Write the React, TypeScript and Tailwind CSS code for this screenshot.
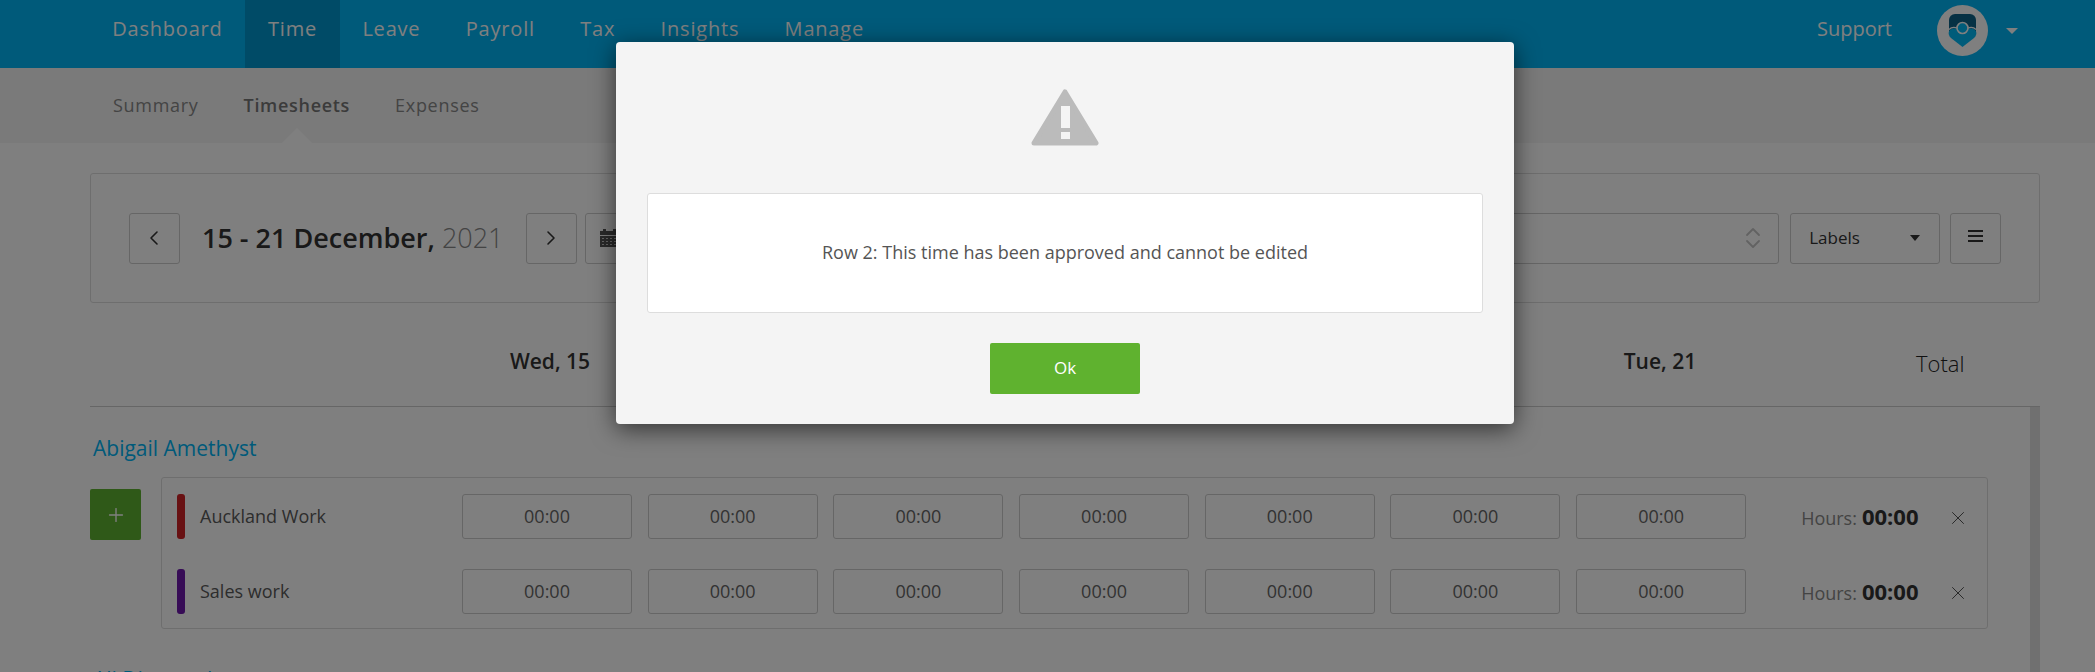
import { ChevronLeft, ChevronRight, ChevronUp, ChevronDown, Plus, X } from "lucide-react";

const navItems = ["Dashboard", "Time", "Leave", "Payroll", "Tax", "Insights", "Manage"];
const rows = [
  { name: "Auckland Work", color: "bg-[#d02226]" },
  { name: "Sales work", color: "bg-[#6e18ac]" },
];
const cells = [0, 1, 2, 3, 4, 5, 6];

const Logo = () => (
  <svg viewBox="0 0 51 51" className="w-[51px] h-[51px] block mb-[7px]">
    <circle cx="25.5" cy="25.5" r="25.5" fill="#ffffff" />
    <path d="M12 15a6 6 0 0 1 6-6h15a6 6 0 0 1 6 6v12H12z" fill="#0c6288" />
    <path d="M25.5 42 L14 33 C9.5 29 12 23.5 16.5 23.5 L34.5 23.5 C39 23.5 41.5 29 37 33 Z" fill="#00b8f5" />
    <path d="M12 24.5c2-2 5-2.500 8-1.500M39 24.500c-2-2-5-2.500-8-1.500" fill="none" stroke="#ffffff" strokeWidth="1.200" />
    <circle cx="25.5" cy="23" r="5.5" fill="#00b8f5" stroke="#ffffff" strokeWidth="1.6" />
  </svg>
);

const CalendarIcon = () => (
  <svg viewBox="0 0 19 18" className="w-[19px] h-[18px]" fill="#555">
    <path d="M0 2h3V0h3v2h7V0h3v2h3v4H0z" />
    <path d="M0 7h19v11H0z" />
    <g fill="#ccc">
      <rect x="2" y="9" width="2" height="1" />
      <rect x="6" y="9" width="2" height="1" />
      <rect x="10" y="9" width="2" height="1" />
      <rect x="14" y="9" width="2" height="1" />
      <rect x="2" y="12" width="2" height="1" />
      <rect x="6" y="12" width="2" height="1" />
      <rect x="10" y="12" width="2" height="1" />
      <rect x="14" y="12" width="2" height="1" />
      <rect x="2" y="15" width="2" height="1" />
      <rect x="6" y="15" width="2" height="1" />
      <rect x="10" y="15" width="2" height="1" />
      <rect x="14" y="15" width="2" height="1" />
    </g>
  </svg>
);

const App = () => {
  return (
    <div className="relative h-[672px] w-[2095px] overflow-hidden bg-white text-[#333] font-['Open_Sans','Noto_Sans',sans-serif]">
      {/* top nav */}
      <div className="h-[68px] bg-[#00b4f5] flex items-center pl-[89.500px] pr-[77px]">
        {navItems.map((item) => (
          <div
            key={item}
            className={
              item === "Time"
                ? "h-full px-[22.700px] pb-[10px] flex items-center text-[20px] tracking-[0.8px] text-white bg-[#0096ce]"
                : "h-full px-[22.700px] pb-[10px] flex items-center text-[20px] tracking-[0.8px] text-white"
            }
          >
            {item}
          </div>
        ))}
        <div className="ml-auto text-[20px] text-white mr-[45px] mb-[10px]">Support</div>
        <Logo />
        <div className="ml-[18px] mb-[7px] w-0 h-0 border-x-[6px] border-x-transparent border-t-[6px] border-t-white" />
      </div>

      {/* sub nav */}
      <div className="relative h-[75px] bg-[#f4f4f4] flex items-center pl-[113px] gap-[45px] text-[18px] tracking-[0.7px] text-[#888]">
        <span>Summary</span>
        <span className="font-semibold text-[#777]">Timesheets</span>
        <span>Expenses</span>
        <div className="absolute left-[282px] bottom-0 w-0 h-0 border-x-[15px] border-x-transparent border-b-[15px] border-b-white" />
      </div>

      {/* filter bar */}
      <div className="mx-[90px] mt-[30px] h-[130px] w-[1950px] border border-[#ddd] rounded-[3px] bg-white flex items-center pl-[38px] pr-[38px]">
        <button className="w-[51px] h-[51px] border border-[#ccc] rounded-[3px] flex items-center justify-center">
          <ChevronLeft size={24} strokeWidth={1.6} color="#333" />
        </button>
        <div className="ml-[22px] text-[27px] font-semibold text-[#333] w-[324px] whitespace-nowrap">
          15 - 21 December, <span className="font-light text-[#888]">2021</span>
        </div>
        <button className="w-[51px] h-[51px] border border-[#ccc] rounded-[3px] flex items-center justify-center">
          <ChevronRight size={24} strokeWidth={1.6} color="#333" />
        </button>
        <button className="ml-[8px] w-[51px] h-[51px] border border-[#ccc] rounded-[3px] flex items-center justify-center">
          <CalendarIcon />
        </button>
        <div className="ml-[10px] w-[1135px] h-[51px] border border-[#ccc] rounded-[3px] flex items-center justify-end pr-[13px]">
          <div className="flex flex-col text-[#c4c4c4]">
            <ChevronUp size={24} strokeWidth={1.8} className="-mb-[6px]" />
            <ChevronDown size={24} strokeWidth={1.8} className="-mt-[6px]" />
          </div>
        </div>
        <div className="ml-[11px] w-[150px] h-[51px] border border-[#ccc] rounded-[3px] flex items-center justify-between pl-[18px] pr-[19px] text-[17px]">
          Labels
          <div className="w-0 h-0 border-x-[5px] border-x-transparent border-t-[6px] border-t-[#333]" />
        </div>
        <div className="ml-[10px] w-[51px] h-[51px] border border-[#ccc] rounded-[3px] flex flex-col items-center justify-center gap-[3px] pb-[4px]">
          <div className="w-[15px] h-[2px] bg-[#333]" />
          <div className="w-[15px] h-[2px] bg-[#333]" />
          <div className="w-[15px] h-[2px] bg-[#333]" />
        </div>
      </div>

      {/* day header */}
      <div className="mx-[90px] w-[1950px] h-[104px] border-b border-[#ccc] relative flex items-center pl-[374px] pt-[14px] text-[21px] font-semibold text-[#333]">
        <div className="w-[172px] text-center">Wed, 15</div>
        <div className="ml-[938px] w-[172px] text-center">Tue, 21</div>
        <div className="ml-[170px] text-[22px] font-light text-[#222] pt-[4px]">Total</div>
      </div>

      {/* body */}
      <div className="relative mx-[90px] w-[1950px] pr-[10px]">
        <div className="absolute right-0 top-0 w-[10px] h-[280px] bg-[#e0e0e0]" />
        <div className="pt-[28px] pl-[3px] text-[21px] leading-[26px] text-[#00b4f5]">Abigail Amethyst</div>
        <div className="flex mt-[16px]">
          <button className="mt-[12px] w-[51px] h-[51px] bg-[#5fb230] rounded-[2px] flex items-center justify-center">
            <Plus size={22} strokeWidth={1.5} color="#ffffff" />
          </button>
          <div className="ml-[20px] w-[1827px] h-[152px] border border-[#ddd] rounded-[3px] flex flex-col gap-[30px] pt-[16px] pl-[15px]">
            {rows.map((row) => (
              <div key={row.name} className="flex items-center h-[45px]">
                <div className={`w-[8px] h-[45px] rounded-[3px] ${row.color}`} />
                <div className="ml-[15px] w-[262px] text-[18px] text-[#5a5a5a]">{row.name}</div>
                <div className="flex gap-[15.7px]">
                  {cells.map((c) => (
                    <div
                      key={c}
                      className="w-[170px] h-[45px] border border-[#ccc] rounded-[3px] flex items-center justify-center text-[18px] text-[#666]"
                    >
                      00:00
                    </div>
                  ))}
                </div>
                <div className="ml-[55px] flex items-baseline whitespace-nowrap">
                  <span className="text-[18px] text-[#888]">Hours:</span>
                  <span className="ml-[5px] text-[22px] font-bold text-[#333]">00:00</span>
                </div>
                <X size={22} strokeWidth={1} color="#444" className="ml-[28px] mt-[2px]" />
              </div>
            ))}
          </div>
        </div>
        <div className="pt-[37px] pl-[3px] text-[21px] leading-[26px] text-[#00b4f5]">Ali Diamond</div>
      </div>

      {/* overlay */}
      <div className="absolute inset-0 bg-black/50" />

      {/* alert */}
      <div className="absolute left-[616px] top-[42px] w-[898px] h-[382px] bg-[#f4f4f4] rounded-[4px] shadow-[0_5px_25px_rgba(0,0,0,0.6)] flex flex-col items-center">
        <svg viewBox="0 0 68 57" className="w-[68px] h-[57px] mt-[47px]">
          <path d="M34 3 L65 54 L3 54 Z" fill="#bbbbbb" stroke="#bbbbbb" strokeWidth="5" strokeLinejoin="round" />
          <rect x="30" y="17" width="9" height="22" fill="#f4f4f4" />
          <rect x="30" y="43" width="9" height="7" fill="#f4f4f4" />
        </svg>
        <div className="mt-[47px] w-[836px] h-[120px] pb-[2px] bg-white border border-[#ddd] rounded-[3px] flex items-center justify-center text-[18px] text-[#555]">
          Row 2: This time has been approved and cannot be edited
        </div>
        <button className="mt-[30px] w-[150px] h-[51px] pb-[2px] bg-[#5fb22f] rounded-[2px] text-white text-[17px]">Ok</button>
      </div>
    </div>
  );
};

export default App;
